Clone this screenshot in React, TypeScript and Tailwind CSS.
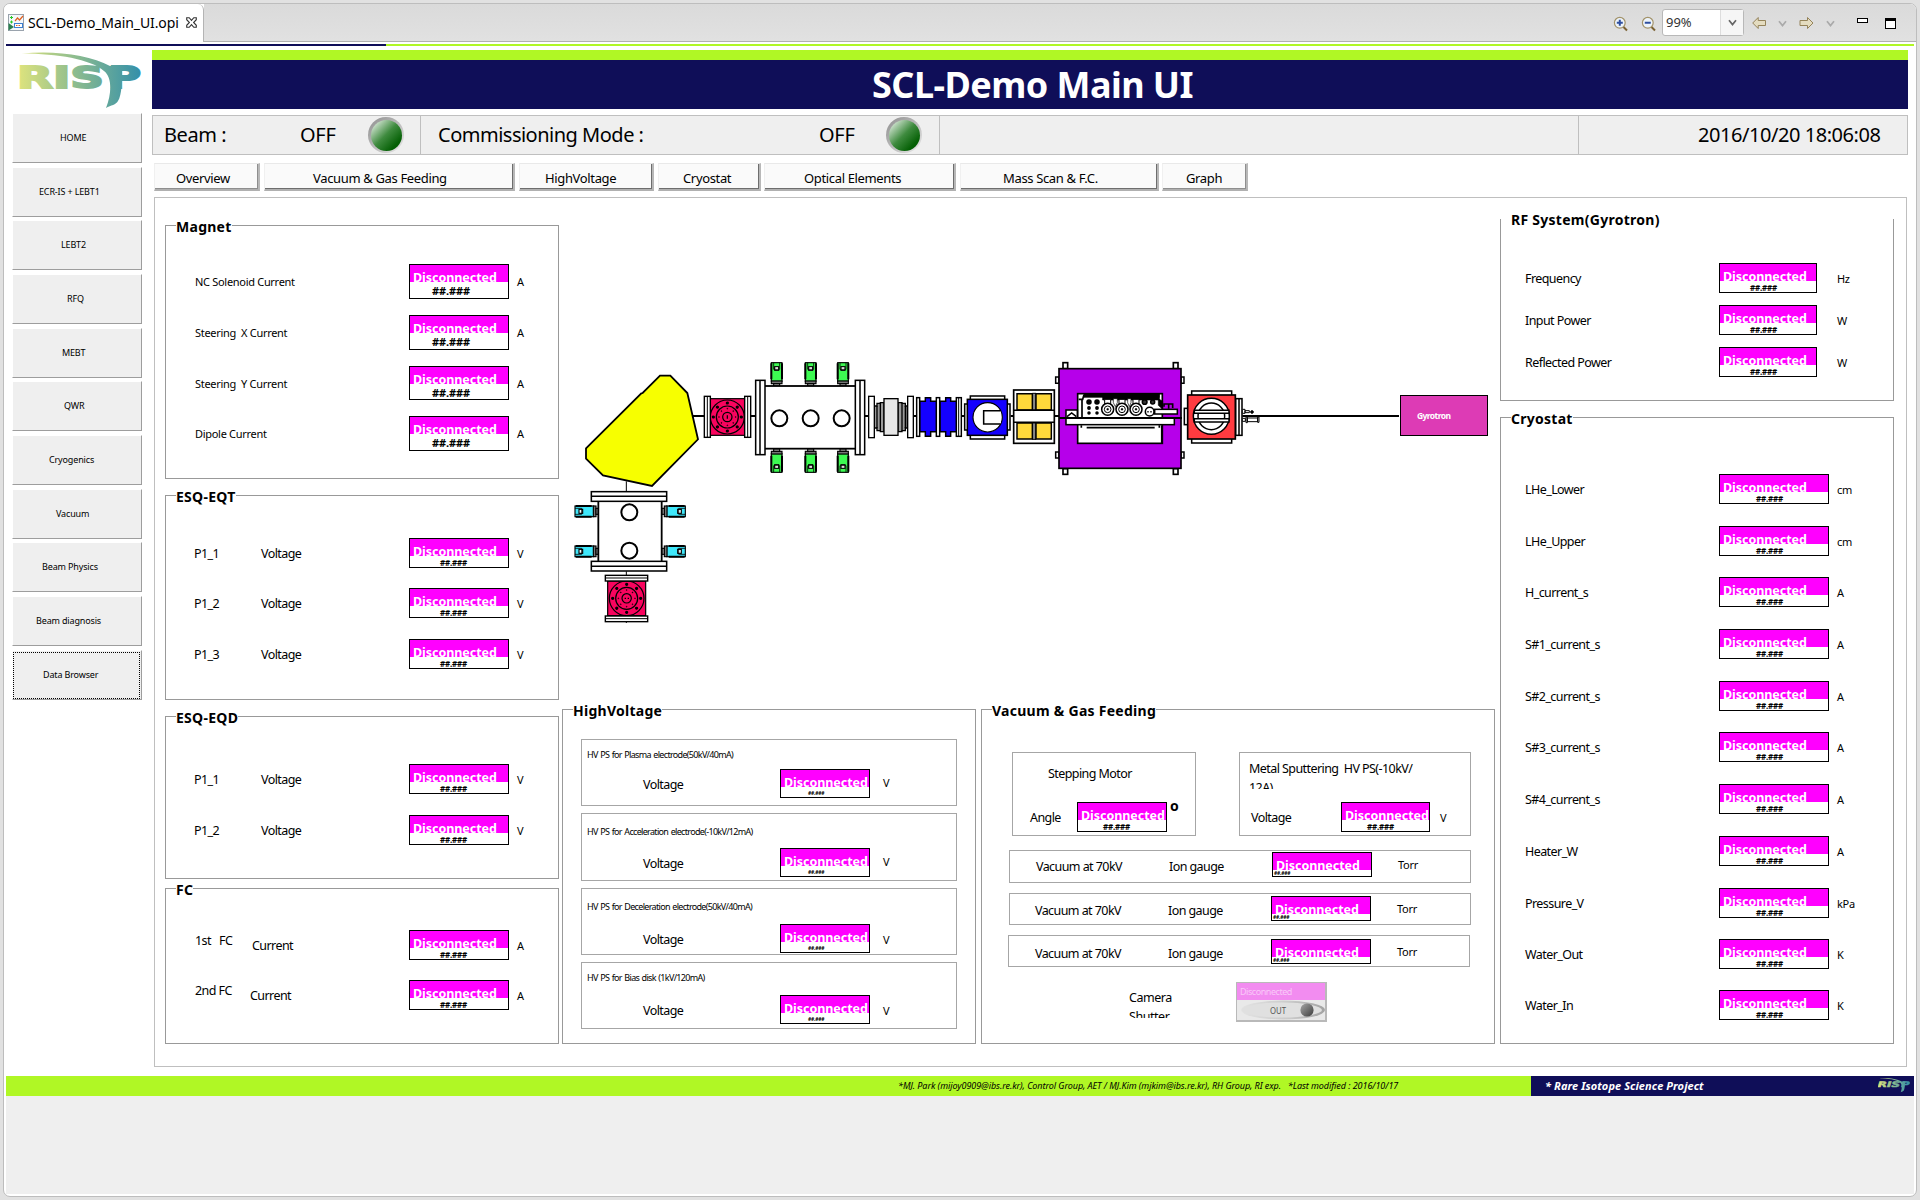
import React from "react";

const FONT = "font-['Noto_Sans',sans-serif]";
const LABEL = "whitespace-pre pt-px text-[12.5px] leading-[16px] tracking-[-0.57px]";
const SMALL = "whitespace-pre pt-px text-[11px] leading-[16px] tracking-[-0.3px]";

function Reading({
  className,
  valueClass,
}: {
  className: string;
  valueClass: string;
}) {
  return (
    <div className={`shrink-0 overflow-hidden border border-black bg-white font-bold ${className}`}>
      <div className="h-[17px] overflow-hidden bg-[#ff00ff] pl-[3px] text-white">
        <div className="mt-[4px] whitespace-nowrap text-[12.5px] leading-[17px] tracking-[-0.05px]">Disconnected</div>
      </div>
      <div className={`whitespace-nowrap text-black ${valueClass}`}>##.###</div>
    </div>
  );
}

const VAL_LG = "pt-px text-[11px] leading-[16px] pl-[22px] tracking-[-0.1px]";
const VAL_SM = "pt-px text-[8px] leading-[11px] pl-[30px] tracking-[-0.2px]";

function Group({
  title,
  className,
  children,
}: {
  title: string;
  className: string;
  children?: React.ReactNode;
}) {
  return (
    <section className={`flex flex-col border border-[#999999] ${className}`}>
      <h2 className="-mt-[8px] ml-[10px] h-[18px] shrink-0 self-start whitespace-nowrap bg-white text-[14px] font-bold leading-[18px] tracking-[0.27px]">
        {title}
      </h2>
      {children}
    </section>
  );
}

const SIDE: { label: string; cls: string }[] = [
  { label: "HOME", cls: "mb-[4px] pl-[47px]" },
  { label: "ECR-IS + LEBT1", cls: "mb-[3px] pl-[26px]" },
  { label: "LEBT2", cls: "mb-[4px] pl-[48px]" },
  { label: "RFQ", cls: "mb-[4px] pl-[54px]" },
  { label: "MEBT", cls: "mb-[3px] pl-[49px]" },
  { label: "QWR", cls: "mb-[4px] pl-[51px]" },
  { label: "Cryogenics", cls: "mb-[4px] pl-[36px]" },
  { label: "Vacuum", cls: "mb-[3px] pl-[43px]" },
  { label: "Beam Physics", cls: "mb-[4px] pl-[29px]" },
  { label: "Beam diagnosis", cls: "mb-[4px] pl-[23px]" },
  { label: "Data Browser", cls: "pl-[30px]" },
];

const TABS: { label: string; cls: string; pad: string; dark: string }[] = [
  { label: "Overview", cls: "w-[106px] mr-[4px]", pad: "pl-[21px]", dark: "border-[#8f8f8f]" },
  { label: "Vacuum & Gas Feeding", cls: "w-[251px] mr-[4px]", pad: "pl-[48px]", dark: "border-[#6e6e6e]" },
  { label: "HighVoltage", cls: "w-[135px] mr-[4px]", pad: "pl-[25px]", dark: "border-[#6e6e6e]" },
  { label: "Cryostat", cls: "w-[103px] mr-[3px]", pad: "pl-[24px]", dark: "border-[#6e6e6e]" },
  { label: "Optical Elements", cls: "w-[192px] mr-[4px]", pad: "pl-[39px]", dark: "border-[#6e6e6e]" },
  { label: "Mass Scan & F.C.", cls: "w-[199px] mr-[3px]", pad: "pl-[42px]", dark: "border-[#6e6e6e]" },
  { label: "Graph", cls: "w-[86px]", pad: "pl-[23px]", dark: "border-[#8f8f8f]" },
];

const MAGNET = [
  { label: "NC Solenoid Current", cls: "mt-[28px] h-[35px]" },
  { label: "Steering  X Current", cls: "mt-[16px] h-[35px]" },
  { label: "Steering  Y Current", cls: "mt-[16px] h-[34px]" },
  { label: "Dipole Current", cls: "mt-[16px] h-[35px]" },
];

const RF = [
  { label: "Frequency", unit: "Hz", cls: "mt-[34px]" },
  { label: "Input Power", unit: "W", cls: "mt-[12px]" },
  { label: "Reflected Power", unit: "W", cls: "mt-[12px]" },
];

const CRYO = [
  { label: "LHe_Lower", unit: "cm", cls: "mt-[46px]" },
  { label: "LHe_Upper", unit: "cm", cls: "mt-[22px]" },
  { label: "H_current_s", unit: "A", cls: "mt-[21px]" },
  { label: "S#1_current_s", unit: "A", cls: "mt-[22px]" },
  { label: "S#2_current_s", unit: "A", cls: "mt-[22px]" },
  { label: "S#3_current_s", unit: "A", cls: "mt-[21px]" },
  { label: "S#4_current_s", unit: "A", cls: "mt-[22px]" },
  { label: "Heater_W", unit: "A", cls: "mt-[22px]" },
  { label: "Pressure_V", unit: "kPa", cls: "mt-[22px]" },
  { label: "Water_Out", unit: "K", cls: "mt-[21px]" },
  { label: "Water_In", unit: "K", cls: "mt-[21px]" },
];

const HV = [
  { label: "HV PS for Plasma electrode(50kV/40mA)", box: "mt-[19px] h-[67px]", cap: "pt-[8px] h-[29px]", unit: "mt-[5px]" },
  { label: "HV PS for Acceleration electrode(-10kV/12mA)", box: "mt-[7px] h-[68px]", cap: "pt-[11px] h-[34px]", unit: "mt-[5px]" },
  { label: "HV PS for Deceleration electrode(50kV/40mA)", box: "mt-[7px] h-[67px]", cap: "pt-[11px] h-[35px]", unit: "mt-[7px]" },
  { label: "HV PS for Bias disk (1kV/120mA)", box: "mt-[7px] h-[67px]", cap: "pt-[8px] h-[32px]", unit: "mt-[7px]" },
];

function EqRow({ name, mt }: { name: string; mt: string }) {
  return (
    <div className={`flex h-[30px] items-start ${mt}`}>
      <span className={`${LABEL} ml-[28px] mt-[7px] w-[67px]`}>{name}</span>
      <span className={`${LABEL} mt-[7px] w-[148px]`}>Voltage</span>
      <Reading className="h-[30px] w-[100px]" valueClass={VAL_SM} />
      <span className={`${SMALL} ml-[8px] mt-[7px]`}>V</span>
    </div>
  );
}

function FcRow({ name, mt, gap }: { name: string; mt: string; gap: string }) {
  return (
    <div className={`flex h-[30px] items-start ${mt}`}>
      <span className={`${LABEL} ml-[29px] mt-[2px] ${gap}`}>{name}</span>
      <span className={`${LABEL} mt-[7px] flex-1`}>Current</span>
      <Reading className="h-[30px] w-[100px]" valueClass={VAL_SM} />
      <span className={`${SMALL} ml-[8px] mt-[7px] w-[41px]`}>A</span>
    </div>
  );
}

function IonRow({ cls, name, first, read, torr }: { cls: string; name: string; first: string; read: string; torr: string }) {
  return (
    <div className={`flex items-start border border-[#a6a6a6] ${cls}`}>
      <span className={`${LABEL} w-[133px] ${first} ${name}`}>Vacuum at 70kV</span>
      <span className={`${LABEL} w-[103px] ${name}`}>Ion gauge</span>
      <Reading className={`h-[25px] w-[100px] ${read}`} valueClass="text-[5px] leading-[7px] pl-px tracking-[-0.2px]" />
      <span className={`${SMALL} ml-[26px] ${torr}`}>Torr</span>
    </div>
  );
}

function Led() {
  return (
    <div className="flex h-[36px] w-[36px] items-center justify-center rounded-full bg-linear-to-br from-[#8f8f8f] via-[#b9b9b9] to-[#ececec]">
      <div className="h-[31px] w-[31px] rounded-full bg-linear-[135deg,#d5e6d5_10%,#3f8b3f_48%,#056005_80%]" />
    </div>
  );
}

function Logo({ id, className }: { id: string; className: string }) {
  return (
    <svg className={className} viewBox="0 0 124 58">
      <defs>
        <linearGradient id={id} gradientUnits="userSpaceOnUse" x1="2" y1="0" x2="122" y2="0">
          <stop offset="0" stopColor="#dbe27e" />
          <stop offset="0.45" stopColor="#8fbd8e" />
          <stop offset="1" stopColor="#3490a9" />
        </linearGradient>
      </defs>
      <text x="-1" y="36.500" fontFamily="DejaVu Sans" fontWeight="bold" fontSize="30" stroke={`url(#${id})`} strokeWidth="1.8" fill={`url(#${id})`} textLength="87" lengthAdjust="spacingAndGlyphs">
        RIS
      </text>
      <text x="90" y="36.500" fontFamily="DejaVu Sans" fontWeight="bold" fontSize="30" stroke={`url(#${id})`} strokeWidth="1.8" fill={`url(#${id})`} textLength="33" lengthAdjust="spacingAndGlyphs">
        P
      </text>
      <path d="M4 2.6 C36 -1 72 4 92 15 H104 C104 30 104 44 100 50 C98 54 93 54 88 57 C94 42 94 26 86 20 C72 8 40 3 4 2.6 Z" fill={`url(#${id})`} />
    </svg>
  );
}

/* Beam line drawing. Units inside the scaled group are thirds of a pixel. */
function Valve({ x, y, rot, color }: { x: number; y: number; rot: number; color: string }) {
  return (
    <g transform={`translate(${x} ${y}) rotate(${rot})`} stroke="#000" strokeWidth="3.4">
      <rect x="-16" y="-70" width="32" height="56" fill={color} />
      <path d="M-16 -68 V-20 M16 -68 V-20" strokeWidth="6" />
      <rect x="-6" y="-58" width="12" height="11" fill="#fff" />
      <path d="M-9 -70 V-50 H9 V-70" fill="none" strokeWidth="2.4" />
      <rect x="-16" y="-15" width="32" height="8" fill="#777" />
      <rect x="-9" y="-7" width="18" height="8" fill="#999" />
    </g>
  );
}

function Target({ x, y, horizontal }: { x: number; y: number; horizontal: boolean }) {
  const dots = [0, 45, 90, 135, 180, 225, 270, 315];
  return (
    <g transform={`translate(${x} ${y})`} stroke="#000" fill="none" strokeWidth="3.6">
      <rect x={horizontal ? -52 : -57} y={horizontal ? -55 : -52} width={horizontal ? 104 : 114} height={horizontal ? 110 : 104} fill="#f8045e" />
      <circle r={horizontal ? 51 : 52} />
      <circle r="33" />
      <circle r="14" />
      {dots.map((a) => (
        <g key={a} transform={`rotate(${a})`}>
          <circle cx="42" r="3" fill="#000" />
          <circle cx="25" r="1.4" fill="#000" strokeWidth="1.4" />
        </g>
      ))}
      <path d={horizontal ? "M0 -5 V5" : "M-6 0 H-2 M3 0 H7"} />
    </g>
  );
}

function BeamLine() {
  return (
    <svg className="block h-[484px] w-[933px]" viewBox="562 225 933 484">
      <g transform="translate(560 340) scale(0.333333)" stroke="#000" strokeWidth="5.4" fill="none">
        <path d="M398 228 H434 M573 228 H587 M914 228 H927 M1062 228 H1071 M1203 228 H1215" />
        <path d="M199 424 V455 M199 694 V705 M199 846 V849" strokeWidth="3" />
        <path d="M300 107 H331 L382 159 L414 298 L276 438 L129 406 L78 356 V325 L244 160 L248 159 Z" fill="#f7ff00" />

        <Target x={502} y={231} horizontal />
        <g fill="#fff" strokeWidth="4.2">
          <rect x="433" y="169" width="18" height="123" />
          <path d="M442 169 V292" strokeWidth="3" />
          <rect x="554" y="169" width="18" height="123" />
          <path d="M563 169 V292" strokeWidth="3" />
        </g>

        {[650, 752, 849].map((x) => (
          <g key={x}>
            <Valve x={x} y={138} rot={0} color="#3dfa52" />
            <Valve x={x} y={327} rot={180} color="#3dfa52" />
          </g>
        ))}
        <rect x="600" y="138" width="300" height="188" fill="#fff" />
        <g fill="#fff" strokeWidth="4.6">
          <rect x="587" y="121" width="28" height="223" />
          <path d="M600 121 V344" />
          <rect x="886" y="121" width="28" height="223" />
          <path d="M900 121 V344" />
        </g>
        {[658, 752, 845].map((x) => (
          <circle key={x} cx={x} cy="235" r="24" fill="#fff" strokeWidth="6" />
        ))}

        <Valve x={115} y={514} rot={-90} color="#3fe8fb" />
        <Valve x={115} y={634} rot={-90} color="#3fe8fb" />
        <Valve x={306} y={514} rot={90} color="#3fe8fb" />
        <Valve x={306} y={634} rot={90} color="#3fe8fb" />
        <rect x="115" y="480" width="190" height="190" fill="#fff" />
        <g fill="#fff" strokeWidth="4.6">
          <rect x="94" y="455" width="226" height="29" />
          <path d="M94 469 H320" />
          <rect x="94" y="664" width="226" height="29" />
          <path d="M94 679 H320" />
        </g>
        <circle cx="208" cy="517" r="24" fill="#fff" strokeWidth="6" />
        <circle cx="208" cy="632" r="24" fill="#fff" strokeWidth="6" />
        <Target x={200} y={775} horizontal={false} />
        <g fill="#fff" strokeWidth="4.2">
          <rect x="136" y="706" width="127" height="17" />
          <path d="M136 714 H263" strokeWidth="3" />
          <rect x="136" y="828" width="127" height="17" />
          <path d="M136 836 H263" strokeWidth="3" />
        </g>

        <g transform="translate(900 0)">
          <path d="M452 228 H461 M584 228 H597 M1147 228 H1617" />
          <g fill="#999" strokeWidth="4">
            <path d="M43 198 H51 V190 H61 V188 H72 V275 H61 V272 H51 V264 H43 Z" />
            <path d="M51 198 V264 M61 190 V272" />
            <path d="M114 188 H126 V190 H136 V198 H142 V264 H136 V272 H126 V275 H114 Z" />
            <path d="M126 190 V272 M136 198 V264" />
            <rect x="72" y="176" width="42" height="110" fill="#e6e6e6" />
            <rect x="26" y="169" width="17" height="124" fill="#fff" />
            <rect x="143" y="169" width="17" height="124" fill="#fff" />
          </g>
          <g fill="#1400ff" strokeWidth="4.4">
            <path d="M179 184 H196 V173 H212 V184 H230 V275 H212 V289 H196 V275 H179 Z" />
            <path d="M240 184 H257 V173 H272 V184 H290 V275 H272 V289 H257 V275 H240 Z" />
            <rect x="170" y="173" width="9" height="116" fill="#fff" />
            <rect x="229" y="173" width="10" height="116" fill="#fff" />
            <rect x="289" y="173" width="15" height="116" fill="#fff" />
            <path d="M296 173 V289" strokeWidth="3" />
          </g>
          <g fill="#fff" strokeWidth="4.6">
            <rect x="331" y="168" width="103" height="129" />
            <rect x="314" y="192" width="136" height="78" />
            <rect x="322" y="178" width="120" height="108" fill="#1400ff" />
            <circle cx="383" cy="232" r="44" strokeWidth="3.4" />
            <path d="M423 212 H371 V252 H423" strokeWidth="4.6" />
          </g>
          <g strokeWidth="4.4">
            <rect x="461" y="150" width="122" height="160" fill="#fff" strokeWidth="5" />
            <path d="M517 160 H528 V210 H517 Z M517 249 H528 V298 H517 Z" fill="#888" strokeWidth="3" />
            <path d="M471 161 H517 V210 H471 Z M528 161 H574 V210 H528 Z M471 249 H517 V297 H471 Z M528 249 H574 V297 H528 Z" fill="#ffd93b" />
            <path d="M461 211 H583 M461 247 H583" />
          </g>
          <g fill="#fff" strokeWidth="5">
            <rect x="609" y="68" width="14" height="18" />
            <rect x="940" y="68" width="14" height="18" />
            <rect x="609" y="386" width="14" height="17" />
            <rect x="940" y="386" width="14" height="17" />
            <path d="M587 111 H597 V130 H587 Z M587 336 H597 V354 H587 Z M963 111 H972 V130 H963 Z M963 336 H972 V354 H963 Z" strokeWidth="4.5" />
            <rect x="597" y="86" width="366" height="299" fill="#b600ea" />
            <rect x="653" y="161" width="254" height="149" strokeWidth="5" />
            <path d="M672 161 H898 V172 H672 Z M728 161 H898 V180 H728 Z M895 176 L908 184 V208 L895 196 Z" fill="#000" strokeWidth="2" />
            <path d="M666 178 V232 M656 178 H668 L672 164" strokeWidth="5" fill="none" />
          </g>
          <g strokeWidth="4.6" fill="#fff">
            {[743, 786, 828].map((x) => (
              <g key={x}>
                <path d={`M${x - 9} 178 H${x + 9} V196 H${x - 9} Z`} strokeWidth="3" />
                <circle cx={x} cy="208" r="18" />
                <circle cx={x} cy="208" r="10" strokeWidth="3" />
                <circle cx={x} cy="208" r="3" fill="#000" strokeWidth="1" />
              </g>
            ))}
            <path d="M760 176 H772 V188 L766 200 L760 188 Z M803 176 H813 V188 L808 200 L803 188 Z" strokeWidth="2" />
            {[687, 711].map((x) => (
              <g key={x} fill="#000">
                <circle cx={x} cy="186" r="6" />
                <circle cx={x} cy="204" r="3.4" />
                <circle cx={x} cy="219" r="3" />
              </g>
            ))}
            <circle cx="854" cy="186" r="7" fill="#333" />
            <circle cx="878" cy="186" r="6" fill="#333" />
            <path d="M912 200 V192 H938 V204 M926 192 V206" fill="none" strokeWidth="5" />
            <rect x="884" y="208" width="68" height="14" />
            <circle cx="869" cy="215" r="13" />
            <path d="M862 215 H866 M871 215 H875" />
            <rect x="618" y="210" width="34" height="24" />
            <path d="M621 230 L635 219 L649 230" fill="none" />
            <rect x="618" y="234" width="325" height="20" />
            <path d="M680 263 H884 M664 256 V263 M898 256 V263" strokeWidth="5" />
            <path d="M597 234 H966" strokeWidth="5.4" />
            <path d="M905 256 V310" />
          </g>
          <g fill="#fff" strokeWidth="4.6">
            <rect x="995" y="153" width="120" height="156" />
            <rect x="973" y="205" width="11" height="49" />
            <rect x="1127" y="176" width="19" height="110" />
            <path d="M1137 176 V286" />
            <rect x="983" y="165" width="143" height="132" fill="#ff3b40" strokeWidth="5" />
            <circle cx="1054" cy="229" r="54" strokeWidth="4.4" />
            <circle cx="1054" cy="229" r="40" strokeWidth="4.4" />
            <path d="M1003 211 H1107 V220 H1003 Z M1003 236 H1107 V246 H1003 Z" strokeWidth="4.4" />
            <path d="M1147 208 H1155 V220 H1147 Z M1155 212 H1168 V218 H1155 Z M1147 235 H1156 V244 H1147 Z M1158 231 H1162 V248 H1158 Z M1162 234 H1193 V245 H1162 Z M1193 231 H1197 V247 H1193 Z" strokeWidth="3" />
            <circle cx="1176" cy="216" r="4" fill="#000" strokeWidth="3" />
          </g>
        </g>
      </g>
      <rect x="1400.5" y="395.5" width="87" height="40" fill="#dd3bb5" stroke="#000" />
      <text x="1417" y="419" fill="#fff" fontFamily="Noto Sans" fontWeight="700" fontSize="8.5" textLength="34">
        Gyrotron
      </text>
    </svg>
  );
}

function Magnifier({ plus }: { plus: boolean }) {
  return (
    <svg className="h-[16px] w-[16px]" viewBox="0 0 16 16">
      <path d="M10 10.5 L14 14.5" stroke="#7b6233" strokeWidth="2" />
      <circle cx="6.8" cy="6.8" r="5.4" fill="#edf4fb" stroke="#a3936a" strokeWidth="1.2" />
      <path d={plus ? "M3.8 6.8 H9.8 M6.8 3.8 V9.8" : "M3.8 6.8 H9.8"} stroke="#2f4f9f" strokeWidth="2" />
    </svg>
  );
}

function Arrow({ flip }: { flip: boolean }) {
  return (
    <svg className="h-[14px] w-[16px]" viewBox="0 0 16 14">
      <path
        d={flip ? "M14 7 L8.5 1.5 V4.5 H1 V9.5 H8.5 V12.5 Z" : "M0.7 7 L6.2 1.5 V4.5 H13.500 V9.5 H6.2 V12.5 Z"}
        fill="#e4dcc0"
        stroke="#94835a"
      />
    </svg>
  );
}

function Chevron({ color }: { color: string }) {
  return (
    <svg className="h-[7px] w-[9px]" viewBox="0 0 9 7">
      <path d="M1 1.2 L4.5 5.6 L8 1.2" fill="none" stroke={color} strokeWidth="1.7" />
    </svg>
  );
}

function TitleBar() {
  return (
    <header className="flex h-[38px] shrink-0">
      <div className="flex w-[200px] shrink-0 items-center rounded-tr-[6px] border-r border-[#b4b4b4] bg-white pb-[2px] pl-[4px]">
        <svg className="h-[17px] w-[16px]" viewBox="0 0 16 17">
          <rect x="0.5" y="0.5" width="15" height="16" fill="#f4f7fa" stroke="#9aa3ad" />
          <path d="M2 3.5 H5 M3.5 2 V5 M2 8 H5 M3.5 6.500 V9.500" stroke="#28c828" />
          <path d="M7 7 L9.500 4 L11.500 6 L15 2" fill="none" stroke="#e06020" strokeWidth="1.2" />
          <rect x="6.500" y="9.500" width="8" height="4" fill="#fff" stroke="#3d7fd0" />
          <path d="M8 11.500 H13" stroke="#e06020" strokeDasharray="1.500 1" />
          <path d="M0.500 9 L6 13 L0.500 16.500 Z" fill="#2c8050" />
        </svg>
        <span className="ml-[4px] mt-px whitespace-nowrap text-[14px] leading-[18px] tracking-[-0.1px]">SCL-Demo_Main_UI.opi</span>
        <svg className="ml-[7px] mt-px h-[11px] w-[11px]" viewBox="0 0 11 11">
          <path d="M0.700 0.700 H3.200 L5.500 3.300 L7.800 0.700 H10.300 V2.700 L7.600 5.500 L10.300 8.300 V10.300 H7.800 L5.500 7.700 L3.200 10.300 H0.700 V8.300 L3.400 5.500 L0.700 2.700 Z" fill="#fff" stroke="#333" strokeWidth="1.100" />
        </svg>
      </div>
      <div className="flex flex-1 items-start border-b border-[#b0b0b0] bg-linear-to-b from-[#dadada] to-[#e1e1e1]">
        <div className="ml-auto mt-[12px] flex w-[49px] gap-[12px]">
          <Magnifier plus />
          <Magnifier plus={false} />
        </div>
        <div className="mt-[5px] flex h-[27px] w-[82px] items-center rounded-[3px] border border-[#b8b8b8] bg-white">
          <span className="w-[57px] pl-[3px] pt-px text-[13px] text-[#333]">99%</span>
          <div className="flex h-full flex-1 items-center justify-center border-l border-[#ddd] bg-[#f6f6f6]">
            <Chevron color="#666" />
          </div>
        </div>
        <div className="ml-[8px] mt-[12px] flex w-[95px] items-center">
          <Arrow flip={false} />
          <span className="ml-[10px] mr-[12px]"><Chevron color="#aaa" /></span>
          <Arrow flip />
          <span className="ml-[11px]"><Chevron color="#aaa" /></span>
        </div>
        <div className="ml-[10px] mt-[14px] h-[5px] w-[11px] border border-black bg-white" />
        <div className="ml-[17px] mr-[20px] mt-[14px] h-[11px] w-[11px] border border-t-[3px] border-black bg-white" />
      </div>
    </header>
  );
}

export default function App() {
  return (
    <div className={`h-[1200px] w-[1920px] overflow-hidden bg-[#e1e1e1] pl-[3px] pt-[3px] text-black ${FONT}`}>
      <div className="flex h-[1194px] w-[1914px] flex-col overflow-hidden rounded-[7px] border border-[#bdbdbd] bg-white">
        <TitleBar />
        <div className="mx-[2px] mt-[2px] flex h-[2px] shrink-0">
          <div className="w-[380px] bg-[#0f0e58]" />
          <div className="flex-1 bg-[#b0f725]" />
        </div>

        <div className="mx-[2px] flex h-[1030px] shrink-0">
          <aside className="flex w-[146px] flex-col">
            <Logo id="logo-main" className="ml-[12px] mt-[5px] h-[58px] w-[124px]" />
            <nav className="ml-[6px] mt-[4px] flex w-[130px] flex-col">
              {SIDE.map((b, i) => (
                <button
                  key={b.label}
                  type="button"
                  className={`flex h-[50px] items-center border-b border-l border-r border-t border-b-[#9d9d9d] border-l-white border-r-[#9d9d9d] border-t-white bg-[#efefef] text-left ${b.cls}`}
                >
                  {i === 10 ? (
                    <span className="-ml-[30px] flex h-[47px] w-[127px] items-center border border-dotted border-black pl-[29px] text-[9px] leading-[12px] tracking-[-0.15px]">
                      {b.label}
                    </span>
                  ) : (
                    <span className="whitespace-nowrap text-[9px] leading-[12px] tracking-[-0.15px]">{b.label}</span>
                  )}
                </button>
              ))}
            </nav>
          </aside>

          <main className="flex w-[1756px] flex-col">
            <div className="mt-[4px] h-[10px] bg-[#b0f725]" />
            <h1 className="h-[49px] bg-[#0f0e58] pl-[5px] text-center text-[36px] font-bold leading-[49px] tracking-[-0.55px] text-white">
              SCL-Demo Main UI
            </h1>

            <div className="mt-[6px] flex h-[40px] items-center border border-[#bfbfbf] bg-[#efefef] text-[20px]">
              <div className="flex h-full w-[268px] items-center border-r border-[#bfbfbf] pl-[11px]">
                <span className="w-[136px] tracking-[-0.45px]">Beam :</span>
                <span className="w-[68px] tracking-[-0.3px]">OFF</span>
                <Led />
              </div>
              <div className="flex h-full w-[519px] items-center border-r border-[#bfbfbf] pl-[17px]">
                <span className="w-[381px] tracking-[-0.5px]">Commissioning Mode :</span>
                <span className="w-[67px] tracking-[-0.3px]">OFF</span>
                <Led />
              </div>
              <div className="h-full w-[639px] border-r border-[#bfbfbf]" />
              <span className="ml-[119px] whitespace-nowrap tracking-[-0.45px]">2016/10/20 18:06:08</span>
            </div>

            <div className="ml-[2px] mt-[8px] flex h-[28px]">
              {TABS.map((t) => (
                <button
                  key={t.label}
                  type="button"
                  className={`flex items-stretch border-b-2 border-l border-r-2 border-t border-b-[#b0b0b0] border-l-[#f0f0f0] border-r-[#b8b8b8] border-t-[#e9e9e9] bg-[#fafafa] ${t.cls}`}
                >
                  <span className={`flex-1 whitespace-nowrap border-b border-r pt-[5px] text-left text-[13px] leading-[18px] tracking-[-0.35px] ${t.pad} ${t.dark}`}>
                    {t.label}
                  </span>
                </button>
              ))}
            </div>

            <div className="ml-[2px] mt-[6px] flex h-[870px] w-[1753px] border border-[#bfbfbf] bg-white pt-[27px]">
              <div className="ml-[10px] flex w-[394px] flex-col">
                <Group title="Magnet" className="h-[254px]">
                  {MAGNET.map((r) => (
                    <div key={r.label} className={`flex items-start ${r.cls}`}>
                      <span className={`${SMALL} ml-[29px] mt-[9px] w-[214px]`}>{r.label}</span>
                      <Reading className="h-full w-[100px]" valueClass={VAL_LG} />
                      <span className={`${SMALL} ml-[8px] mt-[9px]`}>A</span>
                    </div>
                  ))}
                </Group>
                <Group title="ESQ-EQT" className="mt-[16px] h-[205px]">
                  <EqRow name="P1_1" mt="mt-[32px]" />
                  <EqRow name="P1_2" mt="mt-[20px]" />
                  <EqRow name="P1_3" mt="mt-[21px]" />
                </Group>
                <Group title="ESQ-EQD" className="mt-[16px] h-[163px]">
                  <EqRow name="P1_1" mt="mt-[37px]" />
                  <EqRow name="P1_2" mt="mt-[21px]" />
                </Group>
                <Group title="FC" className="mt-[9px] h-[156px]">
                  <FcRow name="1st   FC" mt="mt-[31px]" gap="w-[57px]" />
                  <FcRow name="2nd FC" mt="mt-[20px]" gap="w-[55px]" />
                </Group>
              </div>

              <div className="ml-[3px] flex w-[933px] flex-col">
                <BeamLine />
                <div className="flex h-[335px] gap-[5px]">
                  <Group title="HighVoltage" className="w-[414px]">
                    {HV.map((r) => (
                      <div key={r.label} className={`ml-[18px] flex w-[376px] shrink-0 flex-col border border-[#a6a6a6] ${r.box}`}>
                        <div className={`shrink-0 whitespace-nowrap pl-[5px] text-[9px] leading-[14px] tracking-[-0.68px] [word-spacing:0.8px] ${r.cap}`}>{r.label}</div>
                        <div className="flex items-start">
                          <span className={`${LABEL} ml-[61px] mt-[7px] w-[137px]`}>Voltage</span>
                          <Reading className="h-[29px] w-[90px]" valueClass="pt-[2px] text-[5px] leading-[8px] pl-[27px] tracking-[-0.2px]" />
                          <span className={`${SMALL} ml-[13px] ${r.unit}`}>V</span>
                        </div>
                      </div>
                    ))}
                  </Group>

                  <Group title="Vacuum & Gas Feeding" className="w-[514px]">
                    <div className="ml-[30px] mt-[32px] flex h-[84px] shrink-0">
                      <div className="w-[184px] border border-[#a6a6a6]">
                        <div className={`${LABEL} ml-[35px] mt-[12px] h-[37px]`}>Stepping Motor</div>
                        <div className="flex items-start">
                          <span className={`${LABEL} ml-[17px] mt-[7px] w-[47px]`}>Angle</span>
                          <Reading className="h-[30px] w-[90px]" valueClass="pt-px text-[8px] leading-[11px] pl-[25px] tracking-[-0.2px]" />
                          <span className="-mt-[4px] ml-[3px] text-[14px] font-bold leading-[16px]">o</span>
                        </div>
                      </div>
                      <div className="ml-[43px] w-[232px] border border-[#a6a6a6]">
                        <div className="ml-[9px] mt-[6px] h-[30px] w-[170px] overflow-hidden whitespace-pre text-[12.5px] leading-[19px] tracking-[-0.57px]">
                          {"Metal Sputtering  HV PS(-10kV/\n12A)"}
                        </div>
                        <div className="mt-[13px] flex items-start">
                          <span className={`${LABEL} ml-[11px] mt-[7px] w-[90px]`}>Voltage</span>
                          <Reading className="h-[30px] w-[89px]" valueClass="pt-px text-[8px] leading-[11px] pl-[25px] tracking-[-0.2px]" />
                          <span className={`${SMALL} ml-[10px] mt-[7px]`}>V</span>
                        </div>
                      </div>
                    </div>
                    <IonRow cls="ml-[27px] mt-[14px] h-[33px] w-[462px]" first="ml-[26px]" name="mt-[7px]" read="mt-px" torr="mt-[5px]" />
                    <IonRow cls="ml-[27px] mt-[10px] h-[32px] w-[462px]" first="ml-[25px]" name="mt-[8px]" read="mt-[2px]" torr="mt-[6px]" />
                    <IonRow cls="ml-[26px] mt-[10px] h-[32px] w-[462px]" first="ml-[26px]" name="mt-[9px]" read="mt-[3px]" torr="mt-[7px]" />
                    <div className="ml-[147px] mt-[15px] flex items-start">
                      <div className="mt-[6px] h-[30px] w-[107px] overflow-hidden whitespace-pre text-[12.5px] leading-[19px] tracking-[-0.45px]">{"Camera\nShutter"}</div>
                      <div className="h-[40px] w-[91px] overflow-hidden border-2 border-l-[1px] border-t-[1px] border-[#b9b9b9] bg-[#e9e9e9]">
                        <div className="h-[17px] bg-[#f28cf0] pl-[3px] text-[9px] leading-[18px] tracking-[-0.45px] text-[#f9c9f8]">Disconnected</div>
                        <svg className="block h-[20px] w-[88px]" viewBox="0 0 88 20">
                          <defs>
                            <linearGradient id="sw" x1="0" x2="1">
                              <stop offset="0" stopColor="#e3e3e3" />
                              <stop offset="0.6" stopColor="#c9c9c9" />
                              <stop offset="1" stopColor="#a2a2a2" />
                            </linearGradient>
                            <linearGradient id="knob" x1="0" y1="0" x2="1" y2="1">
                              <stop offset="0" stopColor="#a8a8a8" />
                              <stop offset="1" stopColor="#3c3c3c" />
                            </linearGradient>
                          </defs>
                          <ellipse cx="46" cy="10" rx="42" ry="9.500" fill="url(#sw)" />
                          <ellipse cx="45" cy="10" rx="40" ry="7.500" fill="#e0e0e0" />
                          <circle cx="70" cy="10" r="6.600" fill="url(#knob)" />
                          <text x="33" y="13.500" fontFamily="Noto Sans" fontSize="9.5" fill="#555" textLength="16" lengthAdjust="spacingAndGlyphs">OUT</text>
                        </svg>
                      </div>
                    </div>
                  </Group>
                </div>
              </div>

              <div className="-mt-[6px] ml-[5px] flex w-[394px] flex-col">
                <Group title="RF System(Gyrotron)" className="h-[182px] border-t-0">
                  {RF.map((r) => (
                    <div key={r.label} className={`flex h-[30px] items-start ${r.cls}`}>
                      <span className={`${LABEL} ml-[24px] mt-[7px] w-[194px]`}>{r.label}</span>
                      <Reading className="h-[30px] w-[98px]" valueClass={VAL_SM} />
                      <span className={`${SMALL} ml-[20px] mt-[7px]`}>{r.unit}</span>
                    </div>
                  ))}
                </Group>
                <Group title="Cryostat" className="mt-[16px] h-[627px]">
                  {CRYO.map((r) => (
                    <div key={r.label} className={`flex h-[30px] items-start ${r.cls}`}>
                      <span className={`${LABEL} ml-[24px] mt-[7px] w-[194px]`}>{r.label}</span>
                      <Reading className="h-[30px] w-[110px]" valueClass="pt-px text-[8px] leading-[11px] pl-[36px] tracking-[-0.2px]" />
                      <span className={`${SMALL} ml-[8px] mt-[7px]`}>{r.unit}</span>
                    </div>
                  ))}
                </Group>
              </div>
            </div>
          </main>
        </div>

        <footer className="mx-[2px] flex h-[20px] shrink-0 items-center bg-[#b0f725] italic">
          <span className="w-[1525px] whitespace-pre pl-[892px] text-[9px] tracking-[-0.06px]">
            *MJ. Park (mijoy0909@ibs.re.kr), Control Group, AET / MJ.Kim (mjkim@ibs.re.kr), RH Group, RI exp.   *Last modified : 2016/10/17
          </span>
          <div className="flex h-[20px] flex-1 items-center bg-[#0f0e58] pl-[14px] text-[11px] font-bold tracking-[0.08px] text-white">
            <span className="flex-1 whitespace-nowrap">* Rare Isotope Science Project</span>
            <Logo id="logo-small" className="mb-[2px] mr-[4px] h-[16px] w-[32px]" />
          </div>
        </footer>
        <div className="mx-[2px] mb-[2px] flex-1 bg-[#efefef]" />
      </div>
    </div>
  );
}
